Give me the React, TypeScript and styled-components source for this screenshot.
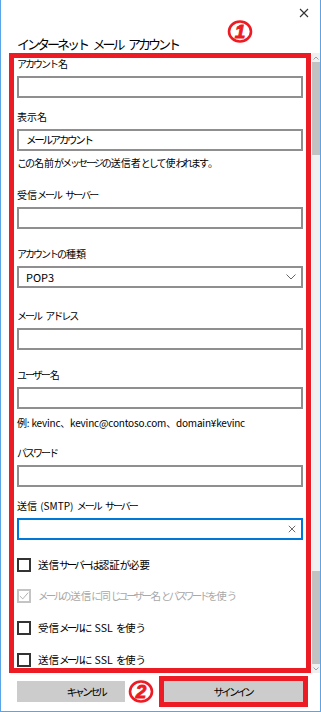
import React from "react";
import styled, { createGlobalStyle } from "styled-components";

const RED = "#ed1c24";

const Global = createGlobalStyle`
  html, body { margin: 0; padding: 0; background: #fff; }
  body {
    width: 321px; height: 712px; overflow: hidden;
    font-family: "Noto Sans CJK JP", sans-serif;
  }
  * { box-sizing: border-box; }
`;

/* Yu Gothic UI sets kana proportionally; emulate by tightening kana runs only */
const Kana = styled.span<{ $ls: number }>`
  letter-spacing: ${(p) => p.$ls}px;
  margin-right: ${(p) => -p.$ls / 2}px;
`;

const KANA_RE = /([\u3040-\u30ff]+)/;
const jp = (text: string, ls: number) =>
  text.split(KANA_RE).map((part, i) =>
    i % 2 === 1 ? (
      <Kana key={i} $ls={ls}>
        {part}
      </Kana>
    ) : (
      <React.Fragment key={i}>{part}</React.Fragment>
    )
  );

const Window = styled.div`
  width: 321px;
  height: 712px;
  border: 1px solid #5ba4e5;
  border-top: none;
  display: flex;
  flex-direction: column;
  background: #fff;
  color: #000;
  font-family: "Noto Sans CJK JP", sans-serif;
`;

const Header = styled.header`
  position: relative;
  height: 53px;
  flex: none;
  display: flex;
  flex-direction: column;
`;

const TitleBar = styled.div`
  height: 36px;
  display: flex;
  justify-content: flex-end;
  align-items: flex-start;
  padding: 8px 11px 0 0;
`;

const CloseButton = styled.button`
  width: 10px;
  height: 10px;
  padding: 0;
  border: none;
  background: transparent;
  display: flex;
`;

const Title = styled.h1`
  margin: 0;
  padding-left: 16px;
  font-size: 13px;
  line-height: 16px;
  font-weight: 400;
  word-spacing: 1px;
  white-space: nowrap;
`;

const Annotation = styled.span<{ $left: number; $top: number; $w: number; $h: number }>`
  position: absolute;
  left: ${(p) => p.$left}px;
  top: ${(p) => p.$top}px;
  width: ${(p) => p.$w}px;
  height: ${(p) => p.$h}px;
  background: #fff;
  display: flex;
  align-items: center;
  justify-content: center;
  pointer-events: none;
`;

const Main = styled.div`
  height: 620px;
  flex: none;
  display: flex;
  padding-left: 8px;
  gap: 1px;
`;

const Panel = styled.section`
  width: 302px;
  border: 5px solid ${RED};
  padding: 0 3px;
  display: flex;
  flex-direction: column;
  overflow: hidden;
`;

const ScrollBar = styled.div`
  width: 8px;
  display: flex;
  flex-direction: column;
  background: #f0f0f0;
`;

const ScrollArrow = styled.div`
  height: 9px;
  display: flex;
  align-items: center;
  justify-content: center;
`;

const Thumb = styled.div<{ $h: number }>`
  height: ${(p) => p.$h}px;
  background: #c2c2c2;
`;

const Track = styled.div`
  flex: 1;
`;

const Field = styled.div<{ $mt: number }>`
  margin-top: ${(p) => p.$mt}px;
  display: flex;
  flex-direction: column;
  gap: 6px;
`;

const Label = styled.label`
  font-size: 10px;
  line-height: 12px;
  height: 12px;
  word-spacing: 1px;
  white-space: nowrap;
`;

const Hint = styled.p<{ $mt: number; $latin?: boolean }>`
  margin: ${(p) => p.$mt}px 0 0;
  font-size: 10px;
  line-height: 12px;
  height: 12px;
  letter-spacing: ${(p) => (p.$latin ? "-0.2px" : "normal")};
  white-space: nowrap;
`;

const TextBox = styled.div<{ $focused?: boolean }>`
  height: 22px;
  border: 2px solid ${(p) => (p.$focused ? "#0078d7" : "#8f8f8f")};
  display: flex;
  align-items: center;
  padding: 0 5px 0 7px;
  gap: 4px;
`;

const Input = styled.input<{ $kana?: boolean }>`
  flex: 1;
  min-width: 0;
  border: none;
  outline: none;
  padding: 0;
  background: transparent;
  font-family: inherit;
  font-size: 10.5px;
  line-height: 14px;
  letter-spacing: ${(p) => (p.$kana ? "-2.3px" : "normal")};
  color: #000;
`;

const SelectValue = styled.span`
  flex: 1;
  font-size: 11px;
  line-height: 14px;
`;

const CheckRow = styled.label<{ $mt: number; $disabled?: boolean }>`
  margin-top: ${(p) => p.$mt}px;
  height: 14px;
  display: flex;
  align-items: center;
  gap: 7px;
  font-size: 10.5px;
  line-height: 14px;
  word-spacing: 1px;
  white-space: nowrap;
  color: ${(p) => (p.$disabled ? "#a8a8a8" : "#000")};
`;

const CheckText = styled.span``;

const Box = styled.span<{ $disabled?: boolean }>`
  width: 14px;
  height: 14px;
  flex: none;
  border: 2px solid ${(p) => (p.$disabled ? "#c4c4c4" : "#333")};
  display: flex;
  align-items: center;
  justify-content: center;
`;

const Footer = styled.footer`
  position: relative;
  flex: 1;
  display: grid;
  grid-template-columns: 1fr 1fr;
  column-gap: 8px;
  align-items: start;
  padding: 8px 17px 0 16px;
`;

const Button = styled.button<{ $marked?: boolean }>`
  height: 21px;
  border: none;
  background: #cccccc;
  font-family: inherit;
  font-size: 10.5px;
  line-height: 14px;
  color: #000;
  padding: 0;
  outline: ${(p) => (p.$marked ? `5px solid ${RED}` : "none")};
`;

const Marker = ({ n }: { n: string }) => (
  <svg width="26" height="23" viewBox="0 0 26 23">
    <ellipse cx="13" cy="11.5" rx="11" ry="10" fill="#fff" stroke={RED} strokeWidth="2.6" />
    <text
      x="13"
      y="18.2"
      textAnchor="middle"
      fontFamily="Liberation Sans, sans-serif"
      fontWeight="900"
      fontStyle="italic"
      fontSize="19"
      fill={RED}
      stroke={RED}
      strokeWidth="0.9"
    >
      {n}
    </text>
  </svg>
);

const Chevron = ({ up }: { up?: boolean }) => (
  <svg width="6" height="4" viewBox="0 0 6 4">
    <polyline
      points={up ? "0.5,3.5 3,1 5.5,3.5" : "0.5,0.5 3,3 5.5,0.5"}
      fill="none"
      stroke="#a0a0a0"
      strokeWidth="1"
    />
  </svg>
);

const Cross = ({ size, color }: { size: number; color: string }) => (
  <svg width={size} height={size} viewBox="0 0 10 10">
    <path d="M1 1 L9 9 M9 1 L1 9" stroke={color} strokeWidth="1.1" fill="none" />
  </svg>
);

const LS_TITLE = -3; // kana tightening for the 13px title
const LS = -2; // kana tightening for 10px text
const LS_CHECK = -2.8; // for 10.5px text

export default function App() {
  return (
    <>
      <Global />
      <Window>
        <Header>
          <TitleBar>
            <CloseButton aria-label="閉じる">
              <Cross size={10} color="#333" />
            </CloseButton>
          </TitleBar>
          <Title>{jp("インターネット メール アカウント", LS_TITLE)}</Title>
          <Annotation $left={226} $top={20} $w={26} $h={23}>
            <Marker n="1" />
          </Annotation>
        </Header>

        <Main>
          <Panel>
            <Field $mt={0}>
              <Label>{jp("アカウント名", LS)}</Label>
              <TextBox>
                <Input defaultValue="" />
              </TextBox>
            </Field>

            <Field $mt={13}>
              <Label>{jp("表示名", LS)}</Label>
              <TextBox>
                <Input $kana defaultValue="メールアカウント" />
              </TextBox>
            </Field>
            <Hint $mt={6}>{jp("この名前がメッセージの送信者として使われます。", LS)}</Hint>

            <Field $mt={20}>
              <Label>{jp("受信メール サーバー", LS)}</Label>
              <TextBox>
                <Input defaultValue="" />
              </TextBox>
            </Field>

            <Field $mt={19}>
              <Label>{jp("アカウントの種類", LS)}</Label>
              <TextBox>
                <SelectValue>POP3</SelectValue>
                <svg width="10" height="6" viewBox="0 0 10 6">
                  <polyline points="0.5,0.5 5,5 9.5,0.5" fill="none" stroke="#666" strokeWidth="1" />
                </svg>
              </TextBox>
            </Field>

            <Field $mt={22}>
              <Label>{jp("メール アドレス", LS)}</Label>
              <TextBox>
                <Input defaultValue="" />
              </TextBox>
            </Field>

            <Field $mt={19}>
              <Label>{jp("ユーザー名", LS)}</Label>
              <TextBox>
                <Input defaultValue="" />
              </TextBox>
            </Field>
            <Hint $mt={8} $latin>
              例: kevinc、kevinc@contoso.com、domain¥kevinc
            </Hint>

            <Field $mt={18}>
              <Label>{jp("パスワード", LS)}</Label>
              <TextBox>
                <Input type="password" defaultValue="" />
              </TextBox>
            </Field>

            <Field $mt={13}>
              <Label>{jp("送信 (SMTP) メール サーバー", LS)}</Label>
              <TextBox $focused>
                <Input defaultValue="" />
                <Cross size={8} color="#555" />
              </TextBox>
            </Field>

            <CheckRow $mt={18}>
              <Box />
              <CheckText>{jp("送信サーバーは認証が必要", LS_CHECK)}</CheckText>
            </CheckRow>
            <CheckRow $mt={17} $disabled>
              <Box $disabled>
                <svg width="12" height="10" viewBox="0 0 12 10">
                  <polyline points="1,5 4.5,8.5 11,1" fill="none" stroke="#a8a8a8" strokeWidth="1.1" />
                </svg>
              </Box>
              <CheckText>{jp("メールの送信に同じユーザー名とパスワードを使う", LS_CHECK)}</CheckText>
            </CheckRow>
            <CheckRow $mt={18}>
              <Box />
              <CheckText>{jp("受信メールに SSL を使う", LS_CHECK)}</CheckText>
            </CheckRow>
            <CheckRow $mt={18}>
              <Box />
              <CheckText>{jp("送信メールに SSL を使う", LS_CHECK)}</CheckText>
            </CheckRow>
          </Panel>

          <ScrollBar>
            <ScrollArrow>
              <Chevron up />
            </ScrollArrow>
            <Thumb $h={93} />
            <Track />
            <Thumb $h={93} />
            <ScrollArrow>
              <Chevron />
            </ScrollArrow>
          </ScrollBar>
        </Main>

        <Footer>
          <Button>{jp("キャンセル", LS_CHECK)}</Button>
          <Button $marked>{jp("サインイン", LS_CHECK)}</Button>
          <Annotation $left={124} $top={6} $w={31} $h={25}>
            <Marker n="2" />
          </Annotation>
        </Footer>
      </Window>
    </>
  );
}
